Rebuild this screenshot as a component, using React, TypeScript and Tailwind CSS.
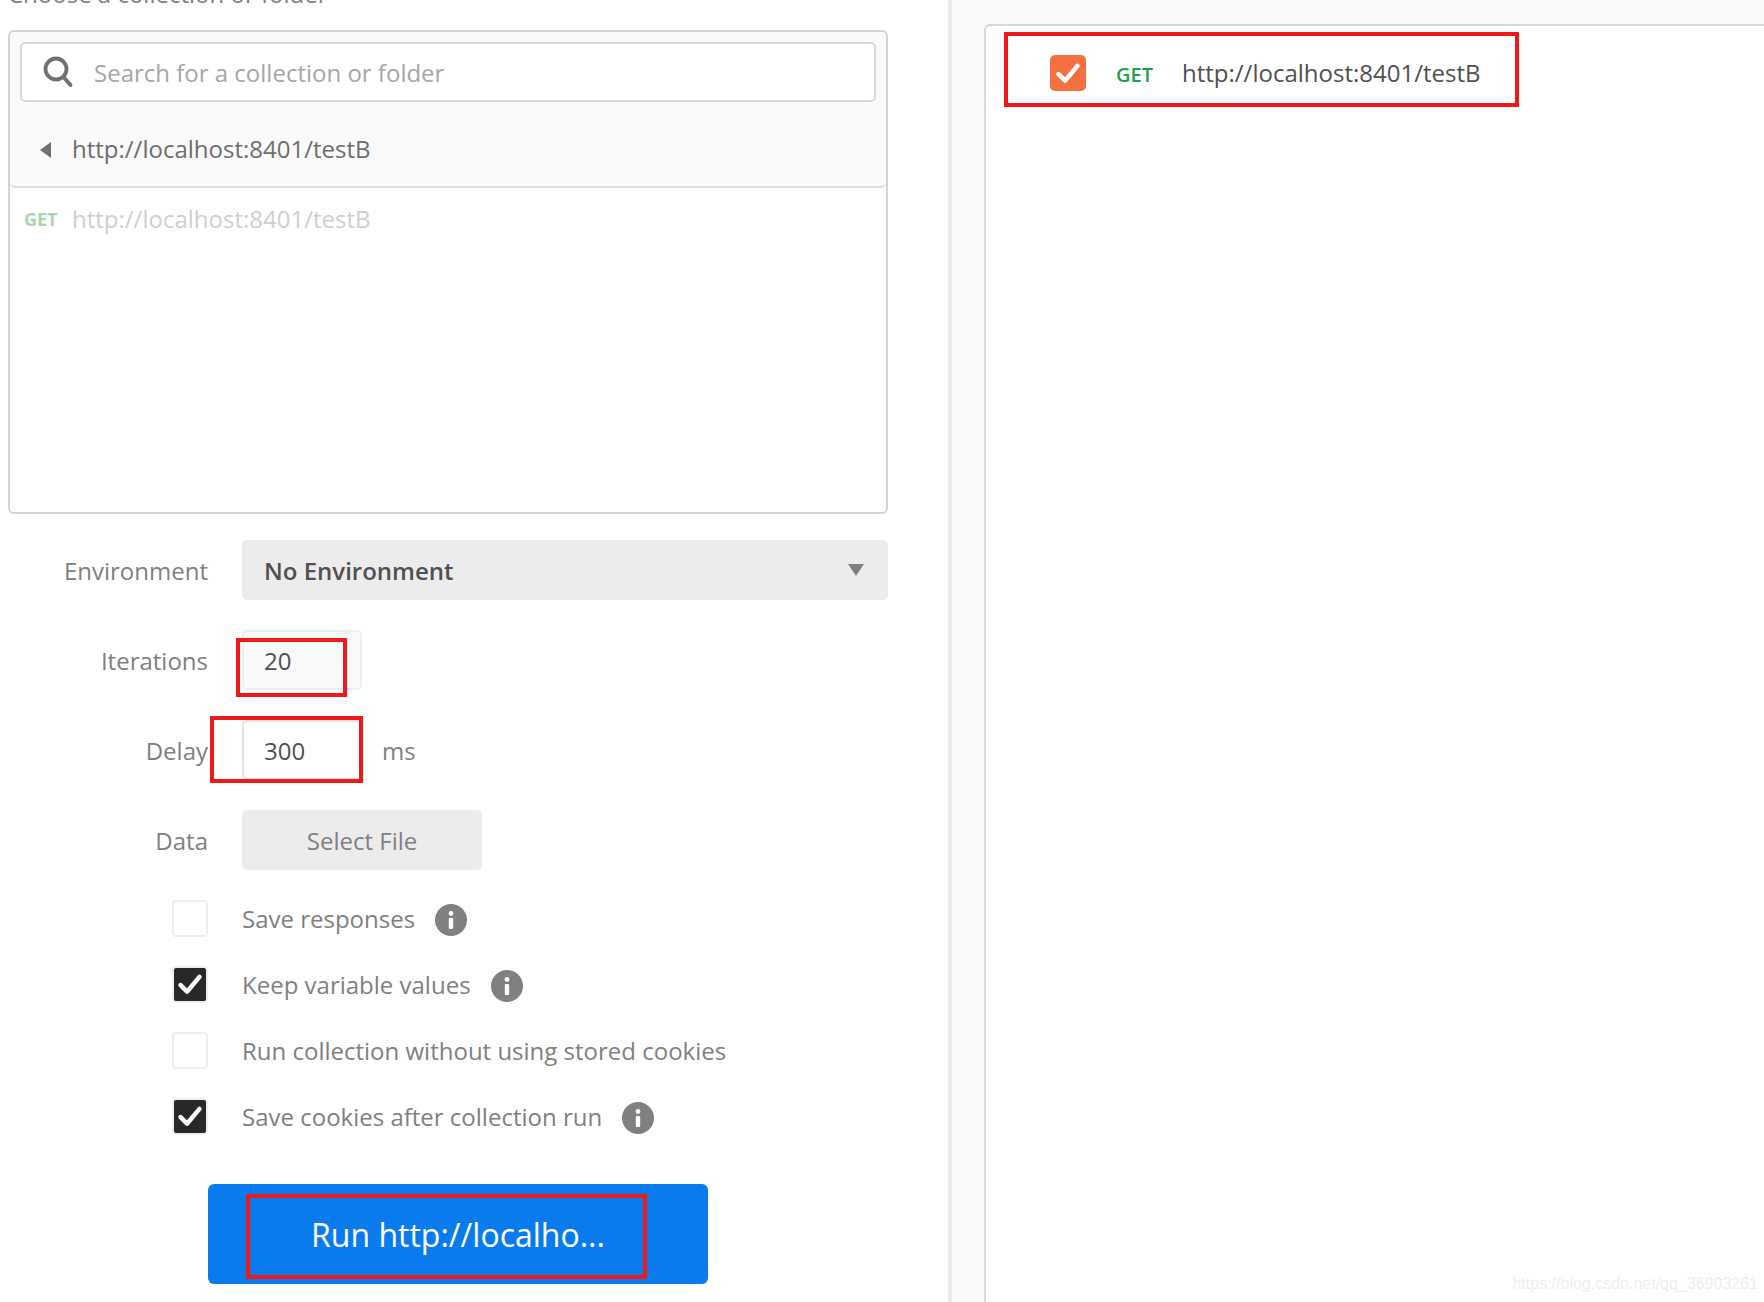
const font = "font-['Open_Sans','Noto_Sans',sans-serif]";

function SearchIcon() {
  return (
    <svg width="32" height="32" viewBox="0 0 32 32" fill="none" stroke="#707070" strokeWidth="3.8" strokeLinecap="round">
      <circle cx="14" cy="13" r="10.5" />
      <path d="M21.5 21 L28.5 29" />
    </svg>
  );
}

function CheckMark({ size = 26 }: { size?: number }) {
  return (
    <svg width={size} height={size} viewBox="0 0 22 22" fill="none" stroke="white" strokeWidth="3.8" strokeLinecap="round" strokeLinejoin="round">
      <path d="M3 12 L8.5 17.5 L19 5" />
    </svg>
  );
}

function InfoIcon() {
  return (
    <svg width="32" height="32" viewBox="0 0 32 32" className="ml-5 mt-[1px] shrink-0">
      <circle cx="16" cy="16" r="16" fill="#808080" />
      <circle cx="16" cy="9.5" r="2.4" fill="white" />
      <rect x="13.8" y="14" width="4.4" height="11" rx="1" fill="white" />
    </svg>
  );
}

function OptionRow({ label, checked, info }: { label: string; checked: boolean; info: boolean }) {
  return (
    <div className="flex items-center h-[66px]">
      <div className="w-[172px] shrink-0" />
      {checked ? (
        <div className="w-[36px] h-[37px] -mt-[2px] shrink-0 rounded-[4px] border-2 border-[#eeeeee] bg-[#282828] flex items-center justify-center">
          <CheckMark />
        </div>
      ) : (
        <div className="w-[36px] h-[37px] -mt-[2px] shrink-0 rounded-[4px] border-2 border-[#eeeeee] bg-white" />
      )}
      <span className="ml-[34px] text-[#808080] text-[24px] leading-[32px] whitespace-nowrap">{label}</span>
      {info && <InfoIcon />}
    </div>
  );
}

function FormRow({ label, children, className }: { label: string; children: React.ReactNode; className: string }) {
  return (
    <div className={`flex items-center ${className}`}>
      <div className="w-[208px] mt-[1px] shrink-0 text-right text-[24px] text-[#808080] leading-[32px]">{label}</div>
      <div className="ml-[34px] flex items-center flex-1">{children}</div>
    </div>
  );
}

export default function App() {
  const options = [
    { label: 'Save responses', checked: false, info: true },
    { label: 'Keep variable values', checked: true, info: true },
    { label: 'Run collection without using stored cookies', checked: false, info: false },
    { label: 'Save cookies after collection run', checked: true, info: true },
  ];

  return (
    <div className={`w-[1764px] h-[1302px] overflow-hidden flex bg-white ${font}`}>
      {/* Left column */}
      <div className="w-[948px] shrink-0 pl-[8px] pr-[60px]">
        <div className="-mt-[22px] h-[52px] text-[24px] leading-[32px] text-[#808080] whitespace-nowrap">
          Choose a collection or folder
        </div>

        <div className="w-[880px] h-[484px] rounded-[6px] border-2 border-[#d4d4d4] bg-white">
          <div className="h-[156px] bg-[#fafafa] border-b-2 border-[#dcdcdc] rounded-[5px] px-[10px] pt-[10px]">
            <div className="h-[60px] rounded-[5px] border-2 border-[#d8d8d8] bg-white flex items-center pl-[20px]">
              <SearchIcon />
              <span className="ml-[20px] mt-[2px] text-[24px] text-[#a6a6a6] whitespace-nowrap">Search for a collection or folder</span>
            </div>
            <div className="mt-[9px] h-[76px] flex items-center pl-[19px]">
              <svg width="12" height="16" viewBox="0 0 12 16" fill="#707070" className="mt-[1px]"><path d="M12 0 V16 L1 8 Z" /></svg>
              <span className="ml-[21px] text-[24px] text-[#6e6e6e] whitespace-nowrap">http://localhost:8401/testB</span>
            </div>
          </div>
          <div className="h-[62px] flex items-center pl-[14px]">
            <span className="w-[48px] text-[18px] font-bold text-[#a5d6ac]">GET</span>
            <span className="text-[24px] text-[#cfcfcf] whitespace-nowrap">http://localhost:8401/testB</span>
          </div>
        </div>

        <div className="-ml-[8px]">
          <FormRow label="Environment" className="mt-[26px] h-[60px]">
            <div className="w-[646px] h-[60px] rounded-[5px] bg-[#ececec] flex items-center justify-between pl-[22px] pr-[24px]">
              <span className="mt-[1px] text-[24px] font-semibold text-[#505050]">No Environment</span>
              <svg width="16" height="12" viewBox="0 0 16 12" fill="#808080"><path d="M0 0 H16 L8 12 Z" /></svg>
            </div>
          </FormRow>

          <FormRow label="Iterations" className="mt-[30px] h-[60px]">
            <div className="relative w-[120px] h-[60px] rounded-[5px] border-2 border-[#eeeeee] bg-[#fafafa] flex items-center pl-[20px] text-[24px] text-[#505050]">
              <span className="mt-[1px]">20</span>
              <div className="absolute left-[-8px] top-[6px] w-[111px] h-[59px] border-[4px] border-[#f01919]" />
            </div>
          </FormRow>

          <FormRow label="Delay" className="mt-[30px] h-[60px]">
            <div className="relative w-[120px] h-[60px] rounded-[5px] border-2 border-[#e2e2e2] bg-white flex items-center pl-[20px] text-[24px] text-[#505050]">
              <span className="mt-[1px]">300</span>
              <div className="absolute left-[-34px] top-[-6px] w-[153px] h-[67px] border-[4px] border-[#f01919]" />
            </div>
            <span className="ml-[20px] mt-[1px] text-[24px] text-[#808080]">ms</span>
          </FormRow>

          <FormRow label="Data" className="mt-[30px] h-[60px]">
            <div className="w-[240px] h-[60px] rounded-[5px] bg-[#ececec] flex items-center justify-center text-[24px] text-[#808080]">
              <span className="mt-[1px]">Select File</span>
            </div>
          </FormRow>

          <div className="mt-[16px]">
            {options.map((option) => (
              <OptionRow key={option.label} label={option.label} checked={option.checked} info={option.info} />
            ))}
          </div>

          <div className="relative ml-[208px] mt-[34px] w-[500px] h-[100px] rounded-[6px] bg-[#097bed] flex items-center justify-center text-white text-[32px]">
            <span className="mt-[1px]">Run http://localho...</span>
            <div className="absolute left-[38px] top-[10px] w-[401px] h-[85px] border-[4px] border-[#f01919]" />
          </div>
        </div>
      </div>

      {/* Right column */}
      <div className="flex-1 bg-[#fafafa] border-l-[4px] border-[#ebebeb] pl-[32px] pt-[24px]">
        <div className="relative h-[1300px] bg-white border-l-2 border-t-2 border-[#d8d8d8] rounded-tl-[6px] flex items-start">
          <div className="relative mt-[6px] ml-[18px] w-[515px] h-[75px] border-[4px] border-[#f01919] flex items-center pl-[42px] pt-[6px]">
            <div className="w-[36px] h-[36px] mt-[1px] rounded-[5px] bg-[#f4703e] flex items-center justify-center">
              <CheckMark />
            </div>
            <span className="ml-[30px] mt-[4px] w-[66px] text-[20px] font-semibold text-[#1fa14f]">GET</span>
            <span className="text-[24px] text-[#505050] whitespace-nowrap">http://localhost:8401/testB</span>
          </div>
          <div className="absolute right-[6px] bottom-[28px] font-['Liberation_Sans',sans-serif] text-[16px] text-[#eeeeee] whitespace-nowrap">
            https://blog.csdn.net/qq_36903261
          </div>
        </div>
      </div>
    </div>
  );
}
